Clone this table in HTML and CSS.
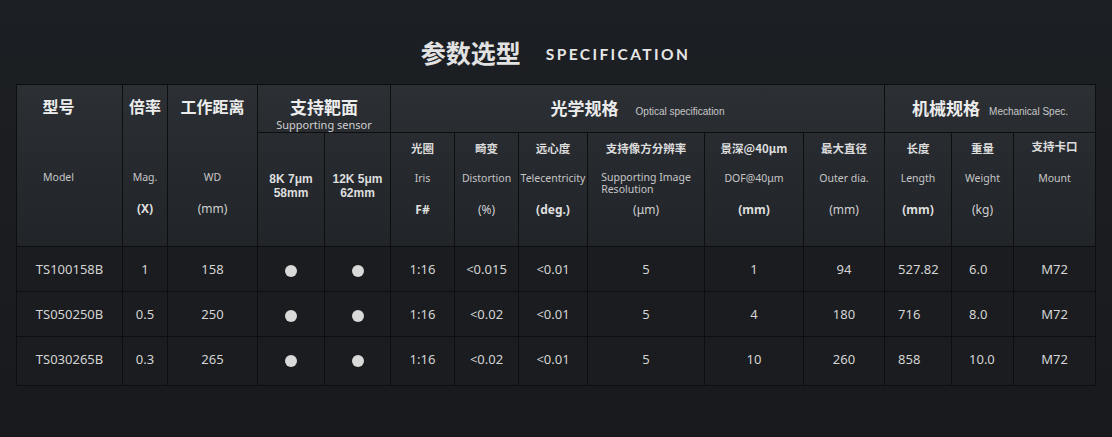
FILE: index.html
```html
<!DOCTYPE html>
<html lang="zh-CN">
<head>
<meta charset="utf-8">
<title>参数选型 SPECIFICATION</title>
<link rel="stylesheet" href="styles.css">
</head>
<body>
<div class="page">
  <h1 class="title"><span class="title-cn">参数选型</span><span class="title-en">SPECIFICATION</span></h1>
  <table class="spec">
    <colgroup>
      <col class="w-model"><col class="w-mag"><col class="w-wd"><col class="w-s1"><col class="w-s2">
      <col class="w-iris"><col class="w-dist"><col class="w-tele"><col class="w-res"><col class="w-dof">
      <col class="w-od"><col class="w-len"><col class="w-wt"><col class="w-mount">
    </colgroup>
    <thead>
      <tr class="hr1">
        <th rowspan="2" class="stack model-h">
          <div class="top">型号</div><div class="l1"></div><div class="l2">Model</div><div class="l3"></div>
        </th>
        <th rowspan="2" class="stack">
          <div class="top">倍率</div><div class="l1"></div><div class="l2">Mag.</div><div class="l3 b">(X)</div>
        </th>
        <th rowspan="2" class="stack">
          <div class="top">工作距离</div><div class="l1"></div><div class="l2">WD</div><div class="l3">(mm)</div>
        </th>
        <th colspan="2" class="grp-sensor">
          <div class="gt">支持靶面</div><div class="gs">Supporting sensor</div>
        </th>
        <th colspan="6" class="grp"><span class="gcn">光学规格</span><span class="gen gap-l">Optical specification</span></th>
        <th colspan="3" class="grp"><span class="gcn">机械规格</span><span class="gen gap-s">Mechanical Spec.</span></th>
      </tr>
      <tr class="hr2">
        <th class="sensor"><span class="sl">8K 7μm</span><span class="sl">58mm</span></th>
        <th class="sensor"><span class="sl">12K 5μm</span><span class="sl">62mm</span></th>
        <th class="stack"><div class="l1">光圈</div><div class="l2">Iris</div><div class="l3 b">F#</div></th>
        <th class="stack"><div class="l1">畸变</div><div class="l2">Distortion</div><div class="l3">(%)</div></th>
        <th class="stack"><div class="l1">远心度</div><div class="l2">Telecentricity</div><div class="l3 b">(deg.)</div></th>
        <th class="stack"><div class="l1">支持像方分辨率</div><div class="l2 res"><span class="res-in">Supporting Image<br>Resolution</span></div><div class="l3">(μm)</div></th>
        <th class="stack"><div class="l1">景深@40μm</div><div class="l2">DOF@40μm</div><div class="l3 b">(mm)</div></th>
        <th class="stack"><div class="l1">最大直径</div><div class="l2">Outer dia.</div><div class="l3">(mm)</div></th>
        <th class="stack"><div class="l1">长度</div><div class="l2">Length</div><div class="l3 b">(mm)</div></th>
        <th class="stack"><div class="l1">重量</div><div class="l2">Weight</div><div class="l3">(kg)</div></th>
        <th class="stack"><div class="l1 up">支持卡口</div><div class="l2">Mount</div><div class="l3"></div></th>
      </tr>
    </thead>
    <tbody>
      <tr>
        <td>TS100158B</td><td>1</td><td>158</td>
        <td><span class="dot"></span></td><td><span class="dot"></span></td>
        <td>1:16</td><td>&lt;0.015</td><td>&lt;0.01</td><td>5</td><td>1</td><td>94</td>
        <td class="len">527.82</td><td class="wt">6.0</td><td>M72</td>
      </tr>
      <tr>
        <td>TS050250B</td><td>0.5</td><td>250</td>
        <td><span class="dot"></span></td><td><span class="dot"></span></td>
        <td>1:16</td><td>&lt;0.02</td><td>&lt;0.01</td><td>5</td><td>4</td><td>180</td>
        <td class="len">716</td><td class="wt">8.0</td><td>M72</td>
      </tr>
      <tr class="last">
        <td>TS030265B</td><td>0.3</td><td>265</td>
        <td><span class="dot"></span></td><td><span class="dot"></span></td>
        <td>1:16</td><td>&lt;0.02</td><td>&lt;0.01</td><td>5</td><td>10</td><td>260</td>
        <td class="len">858</td><td class="wt">10.0</td><td>M72</td>
      </tr>
    </tbody>
  </table>
</div>
</body>
</html>
```

FILE: styles.css
```css
html, body {
  margin: 0;
  padding: 0;
}
body {
  width: 1112px;
  height: 437px;
  overflow: hidden;
  background: linear-gradient(180deg, #1c1f23 0%, #1a1c20 60%, #18191c 100%);
  font-family: "Noto Sans", "Noto Sans CJK SC", sans-serif;
  color: #d2d2d2;
}
.page {
  padding: 0 17px 0 16px;
}
.title {
  margin: 0;
  padding: 38px 0 18px;
  height: 28px;
  line-height: 28px;
  text-align: center;
  font-weight: normal;
  display: flex;
  justify-content: center;
  align-items: center;
  gap: 25px;
}
.title-cn {
  font-family: "Noto Sans CJK SC", sans-serif;
  font-weight: 700;
  font-size: 25px;
  color: #e2e2e2;
}
.title-en {
  font-family: "Lato", "Noto Sans", sans-serif;
  font-weight: 700;
  font-size: 15.5px;
  letter-spacing: 2.4px;
  color: #e6e6e6;
  padding-top: 3px;
}

.spec {
  border-collapse: collapse;
  table-layout: fixed;
  width: 1079px;
  border: 1px solid #0c0d0f;
}
.spec th, .spec td {
  border: 1px solid #0d0e10;
  padding: 0;
  text-align: center;
}
.w-model { width: 106px; }
.w-mag { width: 45px; }
.w-wd { width: 90px; }
.w-s1 { width: 67px; }
.w-s2 { width: 66px; }
.w-iris { width: 64px; }
.w-dist { width: 64px; }
.w-tele { width: 69px; }
.w-res { width: 117px; }
.w-dof { width: 99px; }
.w-od { width: 81px; }
.w-len { width: 67px; }
.w-wt { width: 62px; }
.w-mount { width: 82px; }

thead {
  background: linear-gradient(180deg, #2c3035 0%, #272b30 40%, #212428 100%);
}
.hr1 { height: 47px; }
.hr2 { height: 114px; }

.spec th {
  font-weight: normal;
  vertical-align: top;
}
.stack .top {
  height: 47px;
  line-height: 42px;
  font-family: "Noto Sans CJK SC", sans-serif;
  font-weight: 700;
  font-size: 16px;
  color: #ececec;
}
.model-h { padding-right: 22px !important; }
.stack .l1 {
  height: 30px;
  line-height: 30px;
  font-family: "Noto Sans CJK SC", sans-serif;
  font-weight: 700;
  font-size: 11.5px;
  color: #dcdcdc;
}
.stack .l1.up { line-height: 27px; }
.stack .l2 {
  height: 30px;
  line-height: 30px;
  font-size: 10.5px;
  color: #c6c6c6;
}
.stack .l3 {
  height: 34px;
  line-height: 34px;
  font-size: 12px;
  color: #cfcfcf;
}
.stack .l3.b {
  font-weight: 700;
  color: #dedede;
}
.stack .l2.res {
  box-sizing: border-box;
  padding-top: 8px;
  line-height: 12px;
}
.res-in {
  display: inline-block;
  text-align: left;
}
.spec th.sensor {
  padding-top: 39px;
  font-family: "Liberation Sans", sans-serif;
  font-size: 12px;
  line-height: 14px;
  font-weight: 700;
  color: #dedede;
}
.sl {
  display: block;
  height: 14px;
}

.spec th.grp-sensor {
  padding-top: 11px;
}
.gt {
  font-family: "Noto Sans CJK SC", sans-serif;
  font-weight: 700;
  font-size: 17px;
  line-height: 22px;
  color: #ececec;
}
.gs {
  font-size: 11px;
  line-height: 14px;
  color: #d0d0d0;
}
.spec th.grp {
  vertical-align: middle;
  padding-bottom: 2px;
}
.gcn {
  font-family: "Noto Sans CJK SC", sans-serif;
  font-weight: 700;
  font-size: 17px;
  color: #ececec;
}
.gen {
  font-family: "Liberation Sans", sans-serif;
  font-size: 10px;
  color: #c8c8c8;
}
.gap-l { margin-left: 17px; }
.gap-s { margin-left: 9px; }

tbody {
  background: #1a1c1f;
}
tbody tr { height: 45px; }
tbody tr.last { height: 49px; }
tbody tr.last td { padding-bottom: 4px; }
.spec td {
  font-size: 13px;
  color: #d4d4d4;
  vertical-align: middle;
}
.spec td.len {
  text-align: left;
  padding-left: 13px;
}
.spec td.wt {
  text-align: left;
  padding-left: 17px;
}
.dot {
  display: inline-block;
  width: 12px;
  height: 12px;
  border-radius: 50%;
  background: #d9d9d9;
  vertical-align: middle;
}
```
